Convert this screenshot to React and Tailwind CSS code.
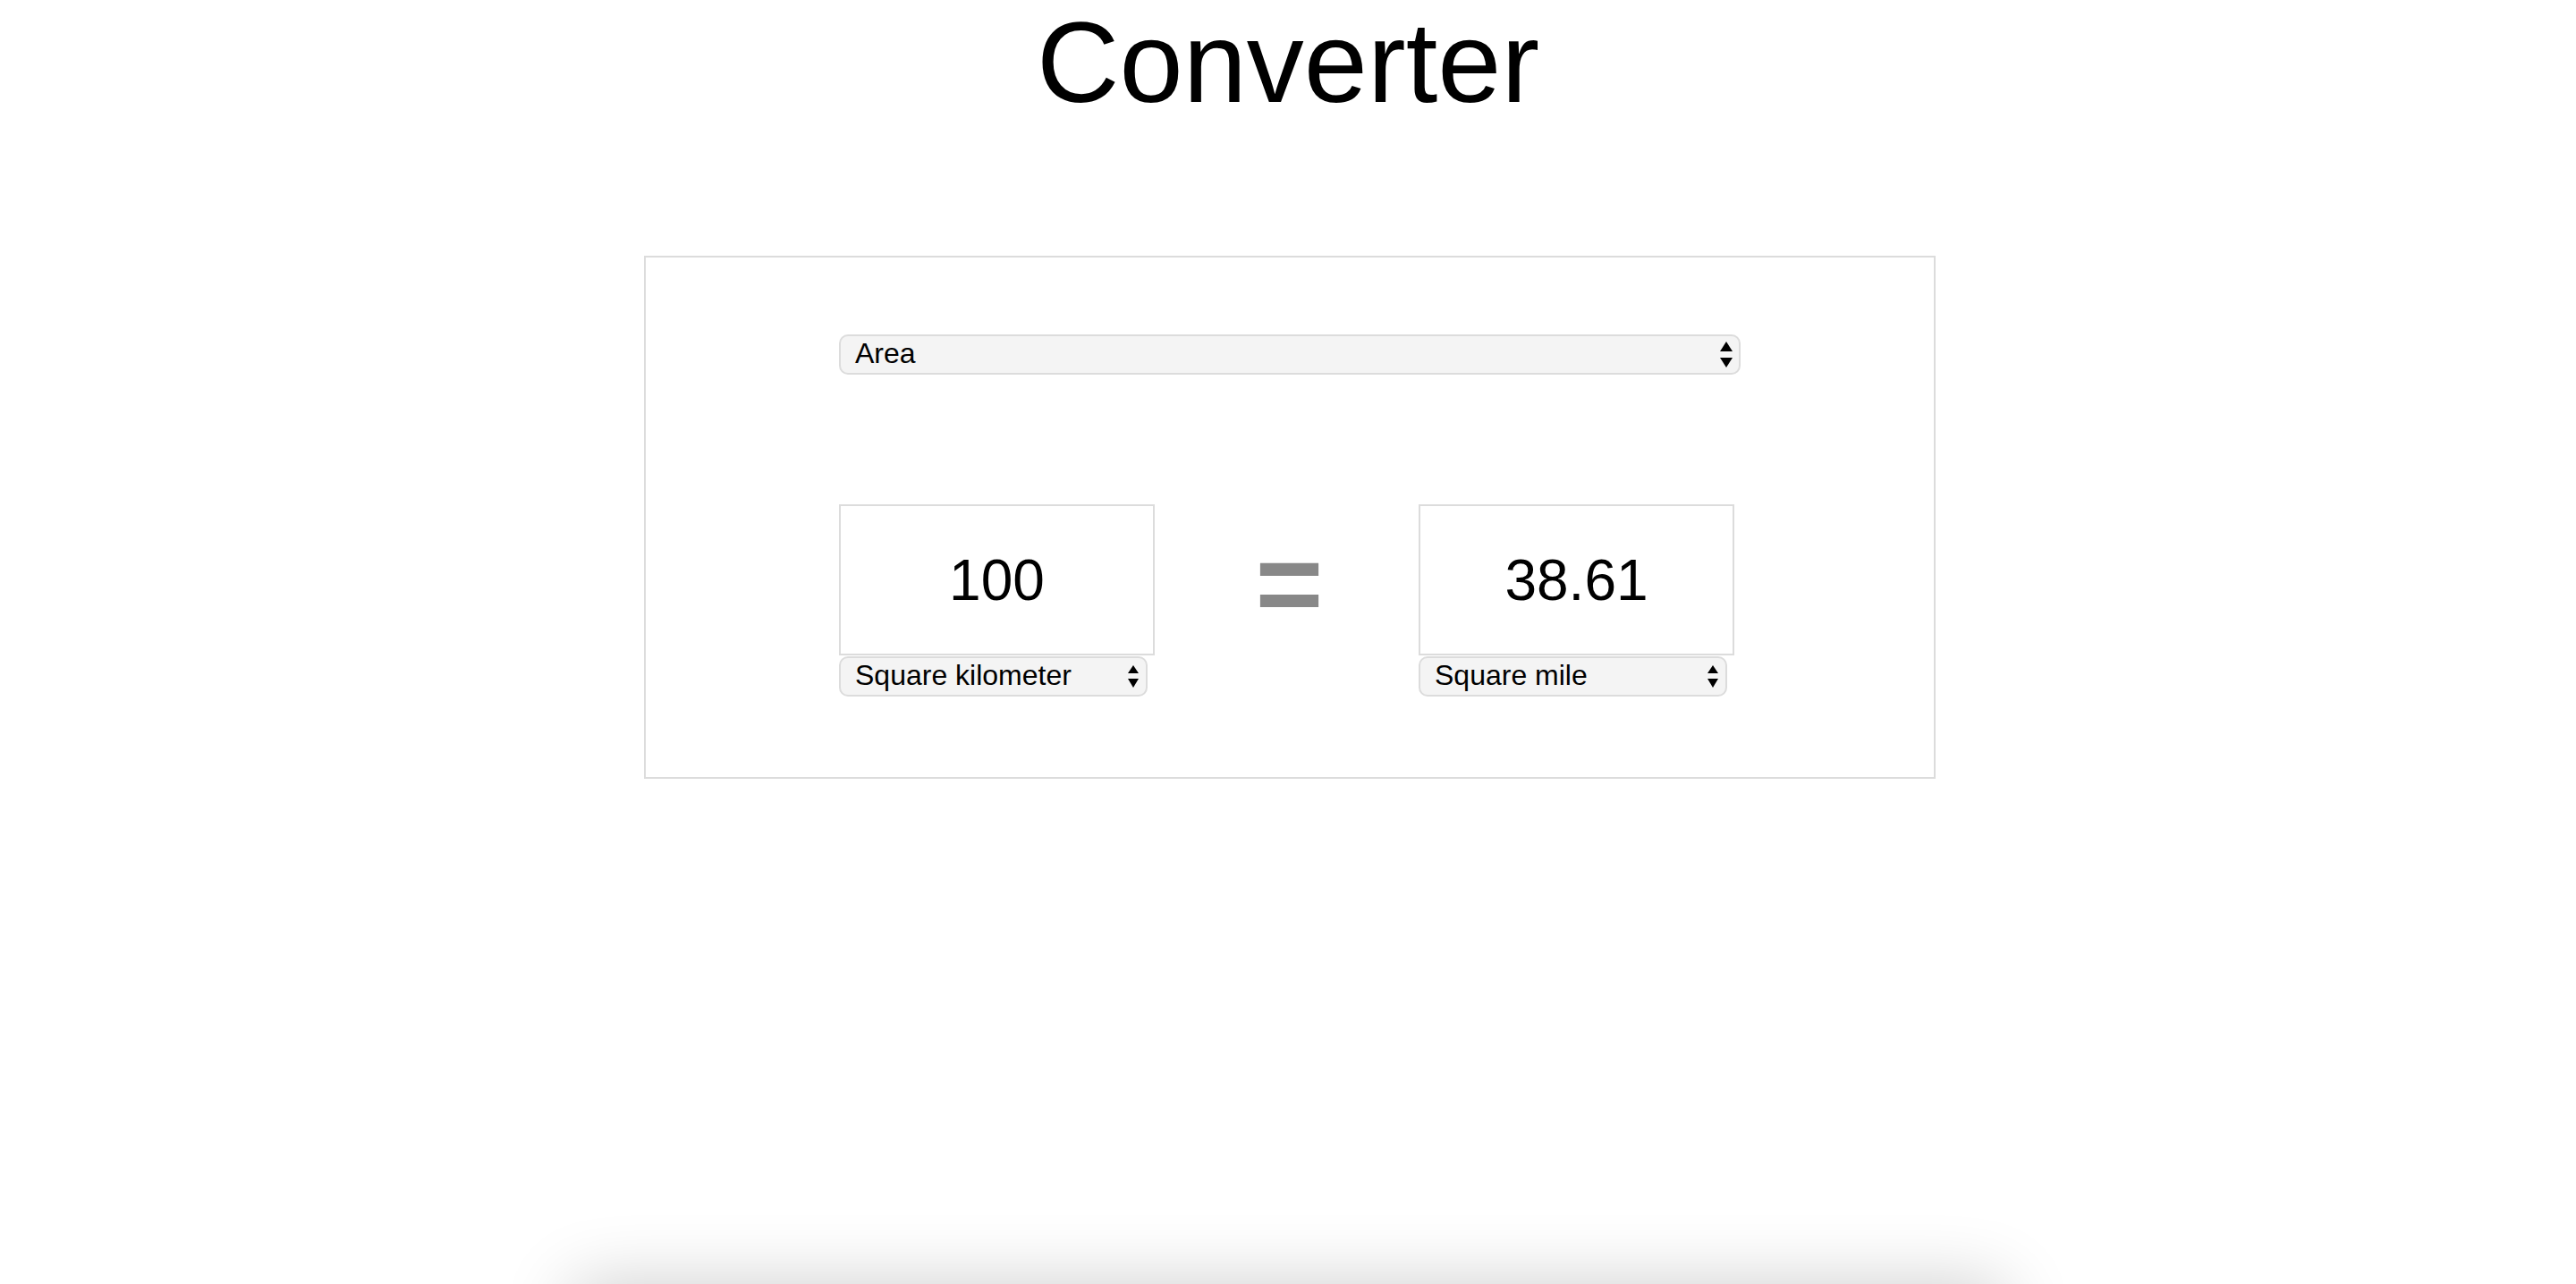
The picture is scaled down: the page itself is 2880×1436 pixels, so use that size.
import React from 'react';

function Arrows({ small }) {
    if (small) {
        return (
            <svg width="12" height="25" viewBox="0 0 12 25" className="shrink-0">
                <path d="M6 0 L12 9 L0 9 Z" fill="#000" />
                <path d="M0 15 L12 15 L6 25 Z" fill="#000" />
            </svg>
        );
    }
    return (
        <svg width="14" height="29" viewBox="0 0 14 29" className="shrink-0">
            <path d="M7 0 L14 11 L0 11 Z" fill="#000" />
            <path d="M0 18 L14 18 L7 29 Z" fill="#000" />
        </svg>
    );
}

function FakeSelect({ label, small, className }) {
    return (
        <div
            className={`flex items-center justify-between h-[45px] border-2 border-[#dcdcdc] rounded-[10px] bg-[#f4f4f4] pl-[16px] ${small ? 'pr-[8px]' : 'pr-[7px]'} ${className}`}
        >
            <span className="text-[32px] leading-[37px] text-black whitespace-nowrap pb-[3px]">{label}</span>
            <Arrows small={small} />
        </div>
    );
}

function UnitField({ value, unit }) {
    return (
        <div className="flex flex-col w-[353px]">
            <input
                type="text"
                readOnly
                value={value}
                className="w-[353px] h-[169px] border-2 border-[#dcdcdc] bg-white text-center text-[64px] text-black outline-none font-['Liberation_Sans',Arial,sans-serif]"
            />
            <FakeSelect label={unit} small className="w-[345px] mt-[1px]" />
        </div>
    );
}

export default function App() {
    return (
        <div className="min-h-screen bg-white font-['Liberation_Sans',Arial,sans-serif] text-black">
            <h1 className="text-[128px] leading-[140px] font-normal text-center">Converter</h1>

            <div className="flex justify-center pl-[4px] mt-[146px]">
                <div className="w-[1444px] border-2 border-[#dcdcdc] pt-[86px] pb-[90px]">
                    <div className="w-[1008px] mx-auto">
                        <FakeSelect label="Area" className="w-[1008px]" />

                        <div className="flex items-start mt-[145px]">
                            <UnitField value="100" unit="Square kilometer" />
                            <div className="w-[295px] h-[169px] flex items-center justify-center pt-[8px] pl-[6px] text-[130px] leading-[143px] font-bold text-[#888888]">
                                =
                            </div>
                            <UnitField value="38.61" unit="Square mile" />
                        </div>
                    </div>
                </div>
            </div>

            {/* card below the fold, only its shadow shows */}
            <div className="w-[1600px] h-[300px] mx-auto mt-[565px] bg-white rounded-[8px] shadow-[0_0_80px_rgba(0,0,0,0.2)]"></div>
        </div>
    );
}
